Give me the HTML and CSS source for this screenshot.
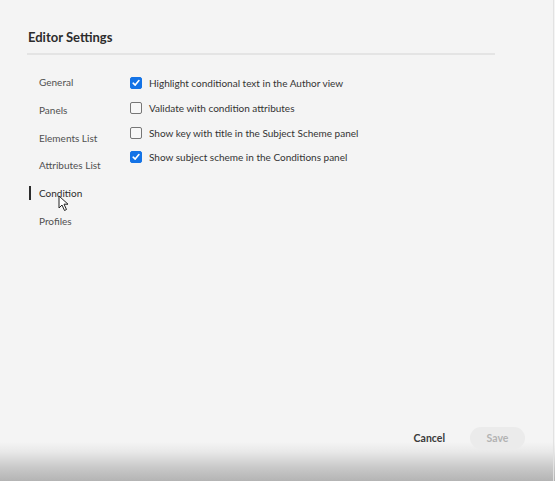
FILE: index.html
```html
<!DOCTYPE html>
<html>
<head>
<meta charset="utf-8">
<link rel="stylesheet" href="styles.css">
</head>
<body>
<div class="dialog">
  <header class="head">
    <h1 class="title">Editor Settings</h1>
  </header>
  <div class="body">
    <nav class="side">
      <div class="nav-item">General</div>
      <div class="nav-item">Panels</div>
      <div class="nav-item">Elements List</div>
      <div class="nav-item">Attributes List</div>
      <div class="nav-item active">Condition
        <svg class="cursor" width="12" height="17" viewBox="0 0 12 17"><path d="M1 1 L1 13 L4 10 L6.5 15.5 L8.5 14.5 L6 9.2 L10 9.2 Z" fill="#fff" stroke="#222" stroke-width="1" stroke-linejoin="round"/></svg>
      </div>
      <div class="nav-item">Profiles</div>
    </nav>
    <div class="options">
      <label class="opt"><span class="box checked"><svg width="8" height="8" viewBox="0 0 8 8"><path d="M1.2 4.2 L3.2 6.1 L6.9 1.6" fill="none" stroke="#fff" stroke-width="1.6" stroke-linecap="round" stroke-linejoin="round"/></svg></span>Highlight conditional text in the Author view</label>
      <label class="opt"><span class="box"></span>Validate with condition attributes</label>
      <label class="opt"><span class="box"></span>Show key with title in the Subject Scheme panel</label>
      <label class="opt"><span class="box checked"><svg width="8" height="8" viewBox="0 0 8 8"><path d="M1.2 4.2 L3.2 6.1 L6.9 1.6" fill="none" stroke="#fff" stroke-width="1.6" stroke-linecap="round" stroke-linejoin="round"/></svg></span>Show subject scheme in the Conditions panel</label>
    </div>
  </div>
  <footer class="foot">
    <button class="btn cancel">Cancel</button>
    <button class="btn save">Save</button>
  </footer>
</div>
</body>
</html>
```

FILE: styles.css
```css
html, body {
  margin: 0;
  height: 100%;
}
body {
  font-family: Lato, "Noto Sans", sans-serif;
  background: linear-gradient(to bottom, #f4f4f4 0, #f4f4f4 442px, #e8e8e8 452px, #c8c8c8 468px, #b4b4b4 481px);
  overflow: hidden;
}
.dialog {
  height: 481px;
  box-sizing: border-box;
  display: flex;
  flex-direction: column;
  border-right: 1px solid #e2e2e2;
  width: 554px;
}
.head {
  padding: 29px 0 0 28px;
}
.title {
  margin: 0 0 0 -1px;
  padding: 0 0 8px 1px;
  font-size: 13px;
  line-height: 16px;
  font-weight: 700;
  color: #2c2c2c;
  width: 467px;
  border-bottom: 2px solid #e4e4e4;
}
.body {
  display: flex;
  padding-top: 18px;
  flex: 1;
}
.side {
  width: 101px;
  padding-left: 29px;
  display: flex;
  flex-direction: column;
}
.nav-item {
  position: relative;
  height: 27.8px;
  line-height: 18px;
  padding-left: 10px;
  font-size: 10px;
  color: #505050;
  box-sizing: border-box;
}
.nav-item.active {
  color: #2c2c2c;
}
.nav-item.active::before {
  content: "";
  position: absolute;
  left: 0;
  top: 2px;
  width: 2px;
  height: 14px;
  background: #2c2c2c;
}
.cursor {
  position: absolute;
  left: 29px;
  top: 11px;
}
.options {
  display: flex;
  flex-direction: column;
  margin-top: -2px;
}
.opt {
  display: flex;
  align-items: center;
  height: 24.7px;
  font-size: 10px;
  color: #333;
}
.box {
  width: 10px;
  height: 10px;
  border: 1px solid #767676;
  border-radius: 2px;
  margin-right: 7px;
  display: flex;
  align-items: center;
  justify-content: center;
  background: #f7f7f7;
}
.box.checked {
  background: #1473e6;
  border-color: #1473e6;
}
.foot {
  display: flex;
  justify-content: flex-end;
  align-items: center;
  padding: 0 28px 32px 0;
  gap: 25px;
}
.btn {
  font-family: Lato, "Noto Sans", sans-serif;
  font-size: 10.5px;
  font-weight: 700;
  border: none;
  height: 22px;
  border-radius: 11px;
  padding: 0 16px;
  cursor: default;
}
.cancel {
  background: transparent;
  color: #3a3a3a;
  padding: 0;
}
.save {
  background: #ebebeb;
  color: #b3b3b3;
  width: 55px;
}
```
